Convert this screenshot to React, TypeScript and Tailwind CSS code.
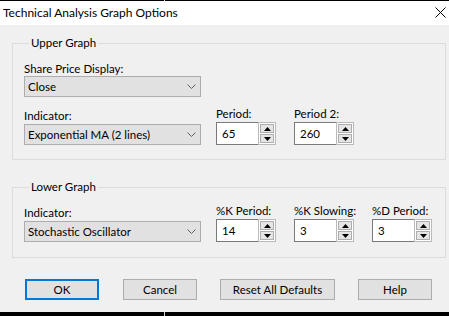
import React from "react";

const font = { fontFamily: "Lato, 'Liberation Sans', sans-serif" };

const Chevron = () => (
  <svg width="9" height="5" viewBox="0 0 9 5" className="shrink-0">
    <path d="M0.5 0.5 L4.5 4.5 L8.5 0.5" fill="none" stroke="#606060" strokeWidth="1" />
  </svg>
);

const Select = ({ value }: { value: string }) => (
  <div className="flex h-[21px] w-[177px] items-center justify-between border border-[#adadad] bg-[#e1e1e1] pl-[3px] pr-[4px] text-[11.5px] leading-none text-black">
    <span>{value}</span>
    <Chevron />
  </div>
);

const Arrow = ({ up }: { up?: boolean }) => (
  <svg width="7" height="4" viewBox="0 0 7 4">
    <path d={up ? "M0 4 L3.5 0 L7 4 Z" : "M0 0 L3.5 4 L7 0 Z"} fill="#000" />
  </svg>
);

const Spin = ({ label, value }: { label: string; value: string }) => (
  <div className="flex w-[60px] flex-col">
    <span className="whitespace-nowrap text-[11.5px] leading-[14px]">{label}</span>
    <div className="mt-[1px] flex h-[23px]">
      <div className="flex flex-1 items-center border border-r-0 border-[#7a7a7a] bg-white pl-[5px] text-[11.5px] leading-none">
        {value}
      </div>
      <div className="flex w-[18px] flex-col gap-[1px] border border-[#b9b9b9] bg-white p-[1px]">
        <div className="flex flex-1 items-center justify-center border border-[#adadad] bg-[#e5e5e5]">
          <Arrow up />
        </div>
        <div className="flex flex-1 items-center justify-center border border-[#adadad] bg-[#e5e5e5]">
          <Arrow />
        </div>
      </div>
    </div>
  </div>
);

const SelectCol = ({ label, value }: { label: string; value: string }) => (
  <div className="flex flex-col">
    <span className="text-[11.5px] leading-[14px]">{label}</span>
    <div className="mt-[1px]">
      <Select value={value} />
    </div>
  </div>
);

const Btn = ({ label, w, def }: { label: string; w: string; def?: boolean }) => (
  <div
    className={`flex h-[21px] items-center justify-center bg-[#e1e1e1] text-[11.5px] leading-none ${w} ${
      def ? "border-2 border-[#0078d7]" : "border border-[#adadad]"
    }`}
  >
    {label}
  </div>
);

export default function App() {
  return (
    <div className="flex h-[316px] w-[449px] flex-col bg-[#f0f0f0] text-black" style={font}>
      <div className="flex h-[1px]">
        <div className="w-[164px] bg-black" />
        <div className="w-[1px] bg-[#d8d8d8]" />
        <div className="flex-1 bg-black" />
      </div>
      <div className="flex h-[24px] items-center justify-between bg-white pl-[3px] pr-[3px]">
        <span className="text-[12px] leading-none">Technical Analysis Graph Options</span>
        <svg width="11" height="11" viewBox="0 0 11 11" className="mb-[1px]">
          <path d="M0.5 0.5 L10.5 10.5 M10.5 0.5 L0.5 10.5" stroke="#000" strokeWidth="1" />
        </svg>
      </div>

      <div className="flex flex-1 flex-col pl-[12px] pr-[3px] pt-[11px]">
        <fieldset className="border border-[#dcdcdc] pb-[14px] pl-[11px]">
          <legend className="ml-[5px] px-[2px] text-[11.5px] leading-[14px]">Upper Graph</legend>
          <div className="mt-[12px]">
            <span className="block text-[11.5px] leading-[14px]">Share Price Display:</span>
            <Select value="Close" />
          </div>
          <div className="mt-[10px] flex items-end">
            <SelectCol label="Indicator:" value="Exponential MA (2 lines)" />
            <div className="ml-[15px]">
              <Spin label="Period:" value="65" />
            </div>
            <div className="ml-[18px]">
              <Spin label="Period 2:" value="260" />
            </div>
          </div>
        </fieldset>

        <fieldset className="mt-[20px] border border-[#dcdcdc] pb-[15px] pl-[11px]">
          <legend className="ml-[5px] px-[2px] text-[11.5px] leading-[14px]">Lower Graph</legend>
          <div className="mt-[10px] flex items-end">
            <SelectCol label="Indicator:" value="Stochastic Oscillator" />
            <div className="ml-[15px]">
              <Spin label="%K Period:" value="14" />
            </div>
            <div className="ml-[18px]">
              <Spin label="%K Slowing:" value="3" />
            </div>
            <div className="ml-[18px]">
              <Spin label="%D Period:" value="3" />
            </div>
          </div>
        </fieldset>

        <div className="mt-[21px] flex pl-[13px]">
          <Btn label="OK" w="w-[74px]" def />
          <div className="ml-[24px]">
            <Btn label="Cancel" w="w-[74px]" />
          </div>
          <div className="ml-[23px]">
            <Btn label="Reset All Defaults" w="w-[115px]" />
          </div>
          <div className="ml-[23px]">
            <Btn label="Help" w="w-[74px]" />
          </div>
        </div>
      </div>

      <div className="flex h-[4px]">
        <div className="w-[164px] bg-black" />
        <div className="w-[1px] bg-[#d8d8d8]" />
        <div className="flex-1 bg-black" />
      </div>
    </div>
  );
}
